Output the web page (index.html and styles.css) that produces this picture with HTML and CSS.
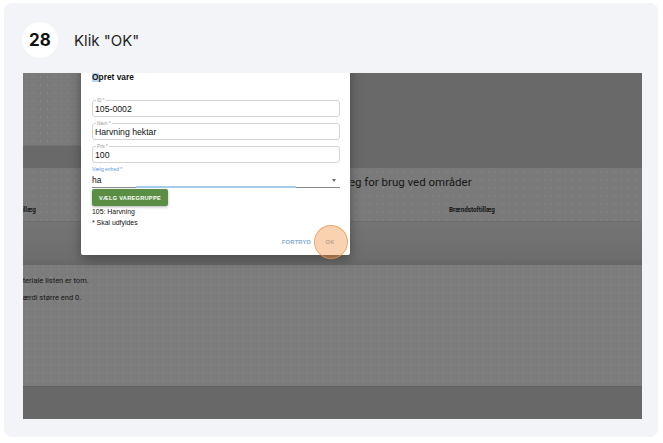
FILE: index.html
```html
<!DOCTYPE html>
<html lang="da">
<head>
    <meta charset="UTF-8">
    <meta name="viewport" content="width=device-width, initial-scale=1.0">
    <title>Trin 28 - Klik "OK"</title>
    <link rel="stylesheet" href="styles.css">
</head>
<body>
    <div class="step-card">
        <!-- Trinnummer og instruktion -->
        <div class="step-head">
            <span class="step-num">28</span>
            <span class="step-title">Klik "OK"</span>
        </div>

        <!-- Skærmbillede med dialog -->
        <div class="shot">
            <div class="band band-top">
                <div class="side-panel"></div>
            </div>
            <div class="band band-table">
                <div class="table-title"><span class="title-text">Tillæg for brug ved områder</span></div>
                <div class="table-cols">
                    <span class="col-cut">Materialetillæg</span>
                    <span>Brændstoftillæg</span>
                </div>
            </div>
            <div class="band band-mid"></div>
            <div class="band band-list">
                <p class="msg msg-first">Materiale listen er tom.</p>
                <p class="msg msg-second">værdi større end 0.</p>
            </div>
            <div class="band band-foot"></div>

            <div class="dialog">
                <h3 class="dialog-title"><span class="sel">O</span>pret vare</h3>
                <div class="field field-first">
                    <span class="field-label">ID *</span>
                    <span class="field-value">105-0002</span>
                </div>
                <div class="field">
                    <span class="field-label">Navn *</span>
                    <span class="field-value">Harvning hektar</span>
                </div>
                <div class="field">
                    <span class="field-label">Pris *</span>
                    <span class="field-value">100</span>
                </div>
                <div class="select-label">Vælg enhed *</div>
                <div class="select">
                    <span>ha</span>
                    <span class="select-arrow"></span>
                    <span class="select-focus"></span>
                </div>
                <div class="btn-green">VÆLG VAREGRUPPE</div>
                <div class="info">105: Harvning</div>
                <div class="info">* Skal udfyldes</div>
                <div class="dialog-actions">
                    <span class="btn-text btn-cancel">FORTRYD</span>
                    <span class="btn-text btn-ok">OK</span>
                </div>
            </div>

            <div class="click-mark"></div>
        </div>
    </div>
</body>
</html>
```

FILE: styles.css
```css
/* Page blanche avec carte grise claire */
body {
    margin: 0;
    background: #ffffff;
    font-family: "Liberation Sans", Arial, sans-serif;
}

.step-card {
    box-sizing: border-box;
    margin: 3px 5px 0 4px;
    height: 434px;
    padding: 19px 16px 0 19px;
    background: #f3f4f7;
    border-radius: 8px;
}

/* En-tete de l'etape */
.step-head {
    display: flex;
    align-items: center;
    gap: 16px;
    height: 36px;
    margin: 0 0 15px -1px;
}

.step-num {
    width: 36px;
    height: 36px;
    border-radius: 50%;
    background: #ffffff;
    display: flex;
    align-items: center;
    justify-content: center;
    font-family: Inter, "Liberation Sans", sans-serif;
    font-weight: 700;
    font-size: 17px;
    color: #111;
}

.step-title {
    font-family: Inter, "Liberation Sans", sans-serif;
    font-size: 15px;
    color: #1f1f1f;
}

/* Capture d'ecran assombrie */
.shot {
    position: relative;
    height: 346px;
    overflow: hidden;
    background: #696969;
    font-family: Roboto, "Liberation Sans", sans-serif;
    color: #161616;
}

.band {
    box-sizing: border-box;
}

.band-top {
    height: 95px;
    background: #696969;
}

.side-panel {
    width: 58px;
    height: 72px;
    background: #7a7a7a;
    background-image: radial-gradient(rgba(255, 255, 255, 0.09) 0.6px, transparent 1px);
    background-size: 7px 8px;
    border-bottom: 1px solid #727272;
}

.band-table {
    height: 54px;
    padding-top: 7px;
    background: #7a7a7a;
    background-image: radial-gradient(rgba(255, 255, 255, 0.08) 0.6px, transparent 1px);
    background-size: 7px 8px;
    border-bottom: 1px solid #6e6e6e;
}

.table-title {
    margin-left: 328px;
    overflow: hidden;
    font-size: 11.5px;
    line-height: 14px;
    white-space: nowrap;
}

.title-text {
    display: inline-block;
    margin-left: -21px;
}

.table-cols {
    display: grid;
    grid-template-columns: 426px 1fr;
    margin-top: 15px;
    font-size: 6.3px;
    font-weight: 700;
    line-height: 12px;
    white-space: nowrap;
}

.col-cut {
    margin-left: -30px;
}

.band-mid {
    height: 43px;
    background: linear-gradient(180deg, #747474, #6e6e6e 80%, #676767);
}

.band-list {
    height: 121px;
    padding-top: 11px;
    background: #7c7c7c;
    background-image: radial-gradient(rgba(255, 255, 255, 0.08) 0.6px, transparent 1px);
    background-size: 8px 8px;
}

.msg {
    margin: 0 0 7px;
    font-size: 7.5px;
    line-height: 10px;
    white-space: nowrap;
}

.msg-first {
    margin-left: -11px;
}

.msg-second {
    margin-left: -4px;
}

.band-foot {
    height: 33px;
    background: #686868;
    border-top: 1px solid #5f5f5f;
}

/* Dialogue "Opret vare" */
.dialog {
    position: absolute;
    left: 58px;
    top: -12px;
    box-sizing: border-box;
    width: 269px;
    height: 194px;
    padding: 10px 10px 3px 11px;
    background: #ffffff;
    box-shadow: 0 4px 12px rgba(0, 0, 0, 0.35);
    border-radius: 2px;
    color: #111;
    font-family: "Liberation Sans", Arial, sans-serif;
}

.dialog-title {
    margin: 0;
    font-size: 8.4px;
    line-height: 12px;
    font-weight: 700;
}

.sel {
    background: #b5d3f3;
}

.field {
    position: relative;
    box-sizing: border-box;
    height: 17px;
    margin-top: 6px;
    border: 1px solid #d4d4d4;
    border-radius: 3px;
    display: flex;
    align-items: center;
    padding: 1px 2px 0;
}

.field-first {
    margin-top: 17px;
}

.field-label {
    position: absolute;
    top: -3px;
    left: 3px;
    padding: 0 1px;
    background: #ffffff;
    font-size: 4.5px;
    line-height: 5px;
    color: #9a9a9a;
}

.field-value {
    font-size: 8.7px;
    line-height: 10px;
}

.select-label {
    margin-top: 3px;
    font-size: 5px;
    line-height: 7px;
    color: #5b98d8;
}

.select {
    position: relative;
    box-sizing: border-box;
    height: 15px;
    border-bottom: 1px solid #8a8a8a;
    display: flex;
    align-items: center;
    justify-content: space-between;
    font-size: 8.5px;
    line-height: 10px;
}

/* Petite fleche du menu deroulant */
.select-arrow {
    width: 0;
    height: 0;
    margin-right: 4px;
    border-left: 2.5px solid transparent;
    border-right: 2.5px solid transparent;
    border-top: 3px solid #6a6a6a;
}

.select-focus {
    position: absolute;
    left: 44px;
    bottom: -1px;
    width: 160px;
    height: 2px;
    background: #a9cbea;
}

.btn-green {
    box-sizing: border-box;
    width: 76px;
    height: 17px;
    margin-top: 1px;
    background: #5b8e45;
    color: #ffffff;
    font-size: 5.6px;
    font-weight: 700;
    letter-spacing: 0.3px;
    display: flex;
    align-items: center;
    justify-content: center;
    border-radius: 2px;
    box-shadow: 0 1px 3px rgba(0, 0, 0, 0.3);
}

.info {
    font-size: 6.9px;
    line-height: 11px;
}

.dialog-actions {
    display: flex;
    justify-content: flex-end;
    gap: 4px;
    height: 20px;
    margin-top: 4px;
}

.btn-text {
    box-sizing: border-box;
    height: 20px;
    padding: 0 5px;
    display: flex;
    align-items: center;
    justify-content: center;
    font-size: 5.8px;
    font-weight: 700;
    letter-spacing: 0.2px;
}

.btn-cancel {
    color: #86acd4;
}

.btn-ok {
    min-width: 20px;
    color: #97aabd;
}

/* Repere du clic */
.click-mark {
    position: absolute;
    left: 291px;
    top: 152px;
    width: 34px;
    height: 34px;
    box-sizing: border-box;
    border-radius: 50%;
    background: rgba(240, 150, 70, 0.42);
    border: 1.5px solid rgba(232, 150, 80, 0.7);
}
```
